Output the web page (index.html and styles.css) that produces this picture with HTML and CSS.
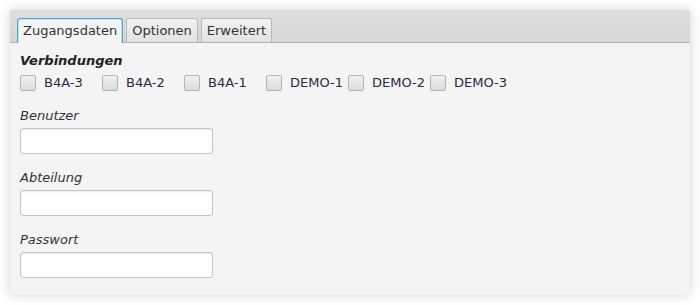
FILE: index.html
```html
<!DOCTYPE html>
<html lang="de">
<head>
    <meta charset="UTF-8">
    <title>Zugangsdaten</title>
    <link rel="stylesheet" href="styles.css">
</head>
<body>
    <div class="tab-pane">
        <div class="tab-header">
            <div class="tab selected">Zugangsdaten</div>
            <div class="tab">Optionen</div>
            <div class="tab">Erweitert</div>
        </div>
        <div class="tab-content">
            <div class="group-title">Verbindungen</div>
            <div class="connections">
                <label class="check"><span class="box"></span>B4A-3</label>
                <label class="check"><span class="box"></span>B4A-2</label>
                <label class="check"><span class="box"></span>B4A-1</label>
                <label class="check"><span class="box"></span>DEMO-1</label>
                <label class="check"><span class="box"></span>DEMO-2</label>
                <label class="check"><span class="box"></span>DEMO-3</label>
            </div>
            <div class="field">
                <div class="field-label">Benutzer</div>
                <div class="text-input"></div>
            </div>
            <div class="field">
                <div class="field-label">Abteilung</div>
                <div class="text-input"></div>
            </div>
            <div class="field">
                <div class="field-label">Passwort</div>
                <div class="text-input"></div>
            </div>
        </div>
    </div>
</body>
</html>
```

FILE: styles.css
```css
body {
    margin: 0;
    background: #ffffff;
    font-family: "DejaVu Sans", sans-serif;
    font-size: 13px;
    color: #333333;
}

.tab-pane {
    margin: 10px;
    width: 680px;
    height: 285px;
    background: #f4f4f4;
    box-shadow: 0 0 10px rgba(0, 0, 0, 0.18);
    display: flex;
    flex-direction: column;
}

.tab-header {
    height: 25px;
    padding: 7px 0 0 7px;
    background: linear-gradient(#dedede, #d6d6d6);
    border-bottom: 1px solid #b3b3b3;
    display: flex;
    gap: 3px;
    align-items: flex-end;
}

.tab {
    height: 23px;
    line-height: 23px;
    padding: 0 5px;
    border: 1px solid #b8b8b8;
    border-bottom: none;
    border-radius: 3px 3px 0 0;
    background: linear-gradient(#f2f2f2, #e2e2e2);
    color: #333333;
}

.tab.selected {
    height: 24px;
    line-height: 23px;
    margin-bottom: -1px;
    border: 1px solid #48a7d6;
    border-bottom: none;
    box-shadow: inset 1px 1px 0 #bfe2f2, inset -1px 0 0 #bfe2f2;
    background: #f4f4f4;
}

.tab-content {
    padding: 9px 10px;
    display: flex;
    flex-direction: column;
}

.group-title {
    font-weight: bold;
    font-style: italic;
    line-height: 17px;
    color: #222222;
}

.connections {
    margin-top: 5px;
    margin-bottom: 1px;
    display: grid;
    grid-template-columns: repeat(6, 82px);
}

.check {
    display: flex;
    align-items: center;
    gap: 8px;
    height: 17px;
    color: #2a2a44;
}

.box {
    width: 14px;
    height: 14px;
    border: 1px solid #b4b4b4;
    border-radius: 2px;
    background: linear-gradient(#f0f0f0, #dcdcdc);
}

.field {
    margin-top: 15px;
    display: flex;
    flex-direction: column;
}

.field-label {
    font-style: italic;
    line-height: 17px;
    color: #333333;
}

.text-input {
    margin-top: 4px;
    width: 191px;
    height: 24px;
    border: 1px solid #c4c4c4;
    border-radius: 3px;
    background: #ffffff;
    box-shadow: inset 0 1px 2px rgba(0, 0, 0, 0.08);
}
```
